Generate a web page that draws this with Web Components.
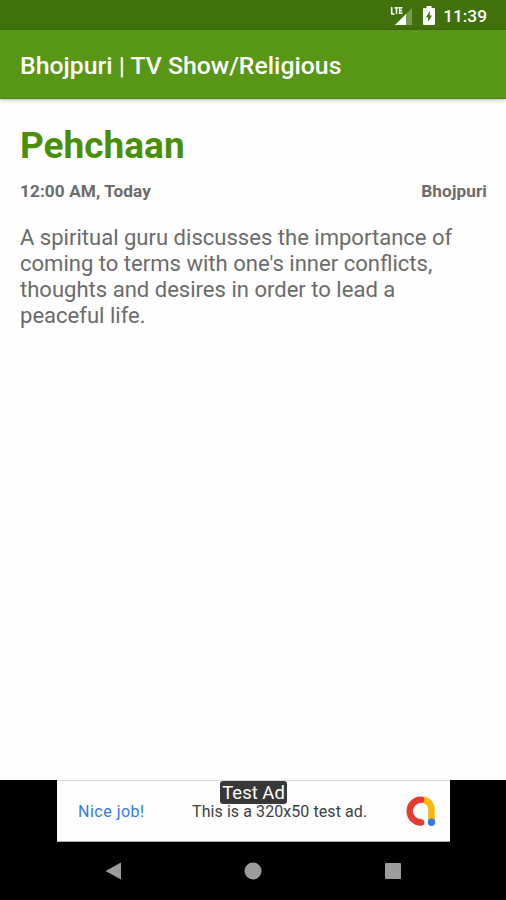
<!DOCTYPE html>
<html lang="en">
<head>
<meta charset="utf-8">
<title>Pehchaan</title>
<style>
  body {
    margin: 0;
    font-family: Roboto, "Noto Sans", sans-serif;
  }
</style>
</head>
<body>
<tv-screen>
  <status-bar slot="top" time="11:39"></status-bar>
  <app-bar slot="top">Bhojpuri | TV Show/Religious</app-bar>
  <show-details>
    <span slot="title">Pehchaan</span>
    <span slot="time">12:00 AM, Today</span>
    <span slot="channel">Bhojpuri</span>
    A spiritual guru discusses the importance of coming to terms with one's inner conflicts, thoughts and desires in order to lead a peaceful life.
  </show-details>
  <ad-banner slot="bottom" label="Test Ad">
    <span slot="action">Nice job!</span>
    This is a 320x50 test ad.
  </ad-banner>
  <nav-bar slot="bottom"></nav-bar>
</tv-screen>

<script>
class TvScreen extends HTMLElement {
  connectedCallback() {
    this.attachShadow({ mode: 'open' });
    this.shadowRoot.innerHTML = `
      <style>
        :host {
          display: flex;
          flex-direction: column;
          height: 900px;
          background: #fefefe;
          overflow: hidden;
        }
        main {
          flex: 1;
          min-height: 0;
        }
      </style>
      <slot name="top"></slot>
      <main><slot></slot></main>
      <slot name="bottom"></slot>
    `;
  }
}
customElements.define('tv-screen', TvScreen);

class StatusBar extends HTMLElement {
  connectedCallback() {
    this.attachShadow({ mode: 'open' });
    this.shadowRoot.innerHTML = `
      <style>
        :host {
          display: flex;
          align-items: center;
          justify-content: flex-end;
          box-sizing: border-box;
          height: 30px;
          padding: 1px 19px 0 0;
          background: #40710a;
          color: #fff;
        }
        svg {
          display: block;
        }
        .signal {
          margin-right: 10px;
        }
        .battery {
          margin-right: 8px;
        }
        time {
          font-size: 17.3px;
          font-weight: 500;
          line-height: 20px;
        }
      </style>
      <svg class="signal" width="23" height="20" viewBox="0 0 23 20">
        <path d="M22 2v17H5z" fill="#fff" opacity=".3"/>
        <path d="M16 8v11H5z" fill="#fff"/>
        <path d="M1.7 1v7h2.8M4.5 1.8h4M6.5 1.8V8M12.5 1.8H9.7v5.5h2.8M9.7 4.5h2.5" fill="none" stroke="#fff" stroke-width="1.6"/>
      </svg>
      <svg class="battery" width="12" height="19" viewBox="0 0 12 19">
        <path d="M3.5 0h5v2H11q1 0 1 1v15q0 1-1 1H1q-1 0-1-1V3q0-1 1-1h2.5z" fill="#fff"/>
        <path d="M6.8 5v4.500H9L5.200 16v-4.800H3z" fill="#40710a"/>
      </svg>
      <time></time>
    `;
    this.shadowRoot.querySelector('time').textContent = this.getAttribute('time');
  }
}
customElements.define('status-bar', StatusBar);

class AppBar extends HTMLElement {
  connectedCallback() {
    this.attachShadow({ mode: 'open' });
    this.shadowRoot.innerHTML = `
      <style>
        :host {
          display: flex;
          align-items: center;
          box-sizing: border-box;
          height: 69px;
          padding: 2px 20px 0;
          background: #589616;
          border-bottom: 1px solid #4d870f;
          box-shadow: 0 1px 4px rgba(0, 0, 0, 0.3);
          color: #fff;
        }
        h1 {
          margin: 0;
          font-size: 24.8px;
          font-weight: 500;
          white-space: nowrap;
        }
      </style>
      <h1><slot></slot></h1>
    `;
  }
}
customElements.define('app-bar', AppBar);

class ShowDetails extends HTMLElement {
  connectedCallback() {
    this.attachShadow({ mode: 'open' });
    this.shadowRoot.innerHTML = `
      <style>
        :host {
          display: block;
          padding: 25px 19px 0 20px;
          color: #6b6b6b;
        }
        h2 {
          margin: 0;
          color: #4a8f0a;
          font-size: 37px;
          font-weight: 700;
          line-height: 44px;
        }
        .meta {
          display: flex;
          justify-content: space-between;
          margin-top: 13px;
          font-size: 17.2px;
          font-weight: 700;
          letter-spacing: 0.1px;
          line-height: 20px;
        }
        p {
          margin: 24px 12px 0 0;
          font-size: 22.05px;
          line-height: 25.9px;
        }
      </style>
      <h2><slot name="title"></slot></h2>
      <div class="meta">
        <slot name="time"></slot>
        <slot name="channel"></slot>
      </div>
      <p><slot></slot></p>
    `;
  }
}
customElements.define('show-details', ShowDetails);

class AdBanner extends HTMLElement {
  connectedCallback() {
    this.attachShadow({ mode: 'open' });
    this.shadowRoot.innerHTML = `
      <style>
        :host {
          display: flex;
          justify-content: center;
          box-sizing: border-box;
          height: 62px;
          padding-left: 1px;
          background: #000;
        }
        .ad {
          position: relative;
          display: grid;
          grid-template-columns: 114px 1fr 31px;
          align-items: center;
          box-sizing: border-box;
          width: 393px;
          padding: 0 14px 0 21px;
          background: #fefefe;
          border-top: 1px solid #d8dcdc;
          border-bottom: 1px solid #aaa;
          color: #3c4043;
          font-size: 16px;
          white-space: nowrap;
        }
        .action {
          color: #3079ee;
          letter-spacing: 0.5px;
        }
        .text {
          letter-spacing: 0.08px;
        }
        /* sits over the top edge of the ad */
        .label {
          position: absolute;
          top: 0;
          left: 163px;
          width: 67px;
          height: 23px;
          border-radius: 3px;
          background: #383838;
          color: #fff;
          font-size: 18.5px;
          line-height: 25px;
          text-align: center;
        }
        svg {
          display: block;
        }
      </style>
      <div class="ad">
        <span class="action"><slot name="action"></slot></span>
        <span class="text"><slot></slot></span>
        <svg width="31" height="31" viewBox="0 0 31 31">
          <path d="M16 3.8Q26.500 4 26.500 15v11" fill="none" stroke="#fbb80b" stroke-width="6.5"/>
          <path d="M16 3.800A11.300 11.300 0 0 0 16 26.400" fill="none" stroke="#e63b2e" stroke-width="6.5" stroke-linecap="round"/>
          <circle cx="26.500" cy="26.300" r="3.700" fill="#3079ee"/>
        </svg>
        <span class="label"></span>
      </div>
    `;
    this.shadowRoot.querySelector('.label').textContent = this.getAttribute('label');
  }
}
customElements.define('ad-banner', AdBanner);

class NavBar extends HTMLElement {
  connectedCallback() {
    this.attachShadow({ mode: 'open' });
    this.shadowRoot.innerHTML = `
      <style>
        :host {
          display: grid;
          grid-template-columns: repeat(3, 140px);
          justify-content: center;
          justify-items: center;
          align-items: center;
          height: 58px;
          background: #000;
        }
        svg {
          display: block;
          fill: #9c9c9c;
        }
      </style>
      <svg width="18" height="18" viewBox="0 0 18 18"><path d="M17 .5v17L1.5 9z"/></svg>
      <svg width="18" height="18" viewBox="0 0 18 18"><circle cx="9" cy="9" r="8.5"/></svg>
      <svg width="18" height="18" viewBox="0 0 18 18"><rect x="1" y="1" width="16" height="16" rx="1"/></svg>
    `;
  }
}
customElements.define('nav-bar', NavBar);
</script>
</body>
</html>
